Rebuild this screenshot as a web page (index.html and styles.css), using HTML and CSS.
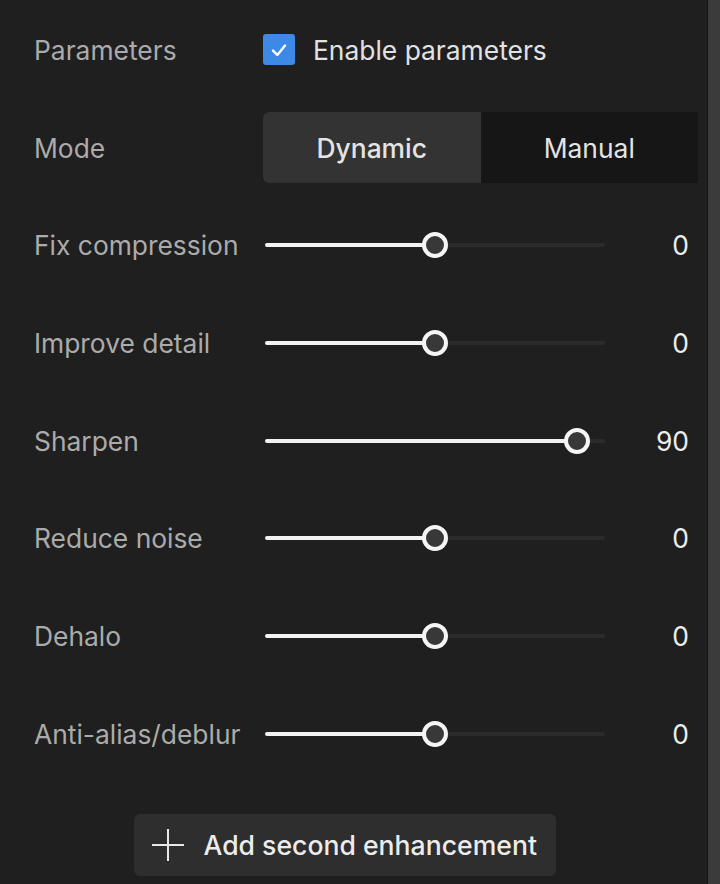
FILE: index.html
```html
<!DOCTYPE html>
<html lang="en">

<head>
    <meta charset="UTF-8">
    <meta name="viewport" content="width=device-width, initial-scale=1.0">
    <title>Enhancement parameters</title>
    <link rel="stylesheet" href="styles.css">
</head>

<body>
    <div class="panel">
        <div class="params">
            <div class="row">
                <span class="label">Parameters</span>
                <label class="check">
                    <span class="box">
                        <svg width="22" height="22" viewBox="0 0 20 20">
                            <path d="M4.5 10.5 L8.5 14.5 L15.5 6" fill="none" stroke="#fff" stroke-width="2.2"
                                stroke-linecap="round" stroke-linejoin="round" />
                        </svg>
                    </span>
                    Enable parameters
                </label>
            </div>
            <div class="row">
                <span class="label">Mode</span>
                <div class="segment">
                    <div class="seg active">Dynamic</div>
                    <div class="seg">Manual</div>
                </div>
            </div>
            <!-- sliders go from -100 to 100, --p is the knob position 0..1 -->
            <div class="row">
                <span class="label">Fix compression</span>
                <div class="slider" style="--p: 0.5"><div class="fill"></div><div class="knob"></div></div>
                <span class="value">0</span>
            </div>
            <div class="row">
                <span class="label">Improve detail</span>
                <div class="slider" style="--p: 0.5"><div class="fill"></div><div class="knob"></div></div>
                <span class="value">0</span>
            </div>
            <div class="row">
                <span class="label">Sharpen</span>
                <div class="slider" style="--p: 0.95"><div class="fill"></div><div class="knob"></div></div>
                <span class="value">90</span>
            </div>
            <div class="row">
                <span class="label">Reduce noise</span>
                <div class="slider" style="--p: 0.5"><div class="fill"></div><div class="knob"></div></div>
                <span class="value">0</span>
            </div>
            <div class="row">
                <span class="label">Dehalo</span>
                <div class="slider" style="--p: 0.5"><div class="fill"></div><div class="knob"></div></div>
                <span class="value">0</span>
            </div>
            <div class="row">
                <span class="label">Anti-alias/deblur</span>
                <div class="slider" style="--p: 0.5"><div class="fill"></div><div class="knob"></div></div>
                <span class="value">0</span>
            </div>
        </div>
        <div class="actions">
            <button class="add">
                <svg width="36" height="36" viewBox="0 0 36 36">
                    <path d="M18 2 V34 M2 18 H34" stroke="#e8e8e8" stroke-width="2" />
                </svg>
                Add second enhancement
            </button>
        </div>
    </div>
    <div class="scrollbar"></div>
</body>

</html>
```

FILE: styles.css
```css
* {
    margin: 0;
    padding: 0;
    box-sizing: border-box;
}

body {
    display: flex;
    height: 884px;
    background: #1f1f1f;
    font-family: Inter, "Liberation Sans", sans-serif;
    font-size: 26.4px;
    color: #e6e6e6;
    overflow: hidden;
}

.panel {
    flex: 1;
    border-right: 1px solid #151515;
}

.scrollbar {
    width: 12px;
    background: #3b3b3b;
}

.params {
    padding-top: 1px;
}

.row {
    display: grid;
    grid-template-columns: 229px 342px 1fr;
    align-items: center;
    height: 97.7px;
    padding-left: 34px;
    padding-right: 18px;
}

.label {
    color: #ababab;
}

.check {
    grid-column: 2 / 4;
    display: flex;
    align-items: center;
    gap: 18px;
    color: #e2e2e2;
}

.box {
    width: 32px;
    height: 31px;
    border-radius: 3px;
    background: #3c8ae6;
    display: flex;
    align-items: center;
    justify-content: center;
}

.segment {
    grid-column: 2 / 4;
    margin-right: -9px;
    display: flex;
    height: 71px;
    border-radius: 6px 0 0 6px;
    overflow: hidden;
    background: #161616;
}

.seg {
    flex: 1;
    display: flex;
    align-items: center;
    justify-content: center;
    color: #e4e4e4;
}

.seg.active {
    background: #333333;
    font-weight: 500;
}

.slider {
    position: relative;
    height: 4px;
    margin-left: 2px;
    background: #2b2b2b;
    border-radius: 2px;
}

.slider .fill {
    height: 100%;
    width: calc(12px + (100% - 24px) * var(--p));
    background: #f2f2f2;
    border-radius: 2px;
}

.slider .knob {
    position: absolute;
    top: 50%;
    left: calc(12px + (100% - 24px) * var(--p));
    width: 26px;
    height: 26px;
    margin: -13px 0 0 -13px;
    border: 4px solid #f5f5f5;
    border-radius: 50%;
    background: #383838;
}

.value {
    text-align: right;
    color: #ececec;
}

.actions {
    display: flex;
    justify-content: center;
    padding: 31px 0 0 0;
    margin-left: -18px;
}

.add {
    display: flex;
    align-items: center;
    gap: 18px;
    width: 422px;
    height: 62px;
    padding-left: 16px;
    border: none;
    border-radius: 6px;
    background: #2e2e2e;
    color: #ececec;
    font-family: inherit;
    font-size: 26.6px;
    font-weight: 500;
}
```
